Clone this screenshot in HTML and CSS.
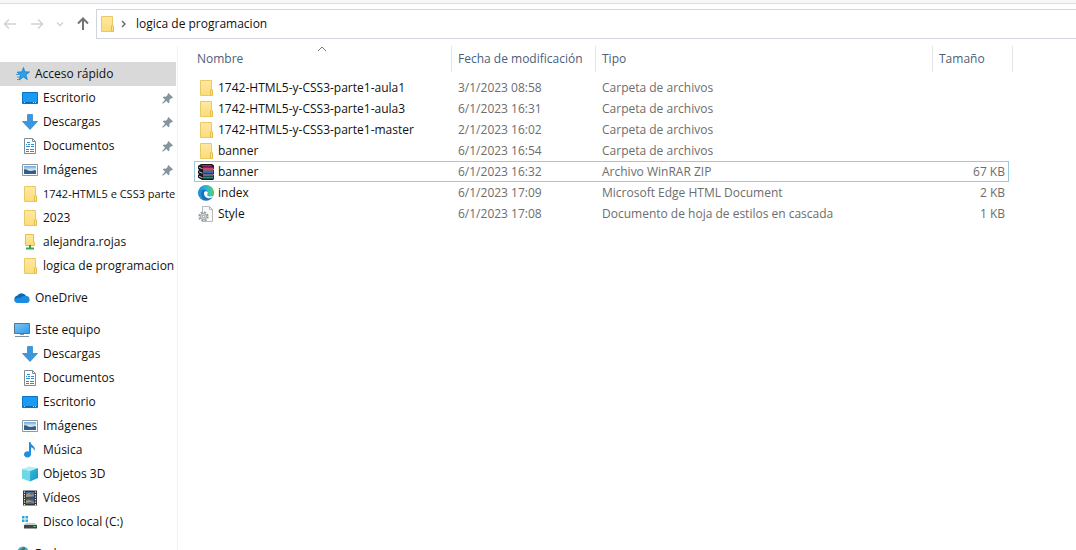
FILE: index.html
```html
<!DOCTYPE html>
<html lang="es">
<head>
<meta charset="utf-8">
<meta name="viewport" content="width=device-width, initial-scale=1">
<title>logica de programacion</title>
<link rel="stylesheet" href="styles.css">
</head>
<body>
<svg class="defs" width="0" height="0" aria-hidden="true">
  <defs>
    <linearGradient id="g-folder" x1="0" y1="0" x2="0" y2="1"><stop offset="0" stop-color="#ffe9a2"/><stop offset="1" stop-color="#fbdb79"/></linearGradient>
    <linearGradient id="g-cube" x1="0" y1="0" x2="1" y2="1"><stop offset="0" stop-color="#3dbfdb"/><stop offset="1" stop-color="#1292c0"/></linearGradient>
    <linearGradient id="g-screen" x1="0" y1="0" x2="1" y2="1"><stop offset="0" stop-color="#7cc6f5"/><stop offset="1" stop-color="#2d9be6"/></linearGradient>
    <linearGradient id="g-edge" x1="0" y1="0" x2="1" y2="0"><stop offset="0" stop-color="#1b8fd8"/><stop offset=".55" stop-color="#2fb9d0"/><stop offset="1" stop-color="#62cf5a"/></linearGradient>
    <linearGradient id="g-photo" x1="0" y1="0" x2="0" y2="1"><stop offset="0" stop-color="#6ba5d8"/><stop offset=".5" stop-color="#dcecf8"/><stop offset="1" stop-color="#2f5f8d"/></linearGradient>
  </defs>
  <symbol id="i-folder" viewBox="0 0 16 16"><path d="M2.500.5h11v11h1v4h-12z" fill="url(#g-folder)" stroke="#ebc962"/><path d="M12.500 15v-5l1-1 1 1v5.500z" fill="#ffe392" stroke="#e5bd4c"/></symbol>
  <symbol id="i-star" viewBox="0 0 16 16"><path d="M9.500 1.500l1.300 4.300 4.700.2-3.600 2.900 1.400 4.600-4-2.500-4 3 1-4.800L3 6.200l5-.4z" fill="#2f9fea" stroke="#1b7fc9" stroke-width=".8"/><path d="M2 8.500h4M3 11h3M3 13.500h2" stroke="#4a9fd8"/></symbol>
  <symbol id="i-desktop" viewBox="0 0 16 16"><path d="M.5 2.500h15v11H.5z" fill="#1b9cf2" stroke="#0b73c4"/><path d="M1 12.500h14" stroke="#086bb8"/><path d="M2 12.500h1M11 12.500h1M13 12.500h1" stroke="#a9dbff"/></symbol>
  <symbol id="i-down" viewBox="0 0 16 16"><path d="M5.500.5h5v7h5L8 15.500.5 7.500h5z" fill="#3a96dd" stroke="#2a7fc4" stroke-width=".7"/></symbol>
  <symbol id="i-doc" viewBox="0 0 16 16"><path d="M2.500.5h8l3 3v12h-11z" fill="#fff" stroke="#7b8a94"/><path d="M10.500.5v3h3" fill="none" stroke="#7b8a94"/><path d="M5 4.500h3M4 6.500h1M6 6.500h2M9 6.500h3M4 8.500h4M9 8.500h3M4 11.500h3M8 11.500h4M4 13.500h3M8 13.500h4" stroke="#2f8bd0"/></symbol>
  <symbol id="i-image" viewBox="0 0 16 16"><path d="M.5 2.500h15v11H.5z" fill="#fff" stroke="#8c979f"/><path d="M2 4h12v8H2z" fill="url(#g-photo)"/><path d="M2 7.500c3-1 4 2 7 1.500s3-1 5-.5V12H2z" fill="#315f8c"/></symbol>
  <symbol id="i-netfolder" viewBox="0 0 16 16"><path d="M3.500.5h8v8h1v3h-9z" fill="url(#g-folder)" stroke="#e5bf52"/><path d="M8 11v3" stroke="#3f9a4c" stroke-width="2"/><path d="M4 14.500h8" stroke="#34a853" stroke-width="2"/></symbol>
  <symbol id="i-cloud" viewBox="0 0 16 16"><path d="M3.500 5.500a5 5 0 0 1 8.600.7L6 12 .5 10a3.700 3.700 0 0 1 3-4.500z" fill="#0d66b7"/><path d="M11.500 6.200a3.400 3.400 0 0 1 1.300 6.800H4C1 13 .3 11 .3 10c2-2.500 4-2.700 5.700-1.700 1.500-1.900 3.600-2.500 5.500-2.100z" fill="#1b8de0"/></symbol>
  <symbol id="i-pc" viewBox="0 0 16 16"><path d="M.5 1.500h15v10H.5z" fill="url(#g-screen)" stroke="#52778f"/><path d="M6 12.500h4M1 14.500h14" stroke="#7e939f"/></symbol>
  <symbol id="i-music" viewBox="0 0 16 16"><path d="M7 0h1.500c.3 3.500 5.500 3.700 4 9-.6-2.200-1.800-3.200-3.500-3.500v7a3.500 3.100 0 1 1-2-2.900z" fill="#1d8fe1"/></symbol>
  <symbol id="i-cube" viewBox="0 0 16 16"><path d="M0 3l7-2.500L16 2l-8 3z" fill="#b5eef5"/><path d="M0 3l8 2v10.500L0 12.500z" fill="#6fd8e6"/><path d="M8 5l8-3v10l-8 3.500z" fill="url(#g-cube)"/></symbol>
  <symbol id="i-video" viewBox="0 0 16 16"><path d="M1 .5h14v15H1z" fill="#303338"/><path d="M4 2h8v5.500H4z" fill="#4a6fb0"/><path d="M4 8.500h8V14H4z" fill="#40619c"/><path d="M4 5l3-2 2 2 3-1v1.500l-4 1-4 .5zM4 11l3-1 5 2v1l-4-1-4 1z" fill="#b69943"/><path d="M2.500 1.500v14M13.500 1.500v14" stroke="#e8ecef" stroke-width="1.200" stroke-dasharray="1.200 1.300"/></symbol>
  <symbol id="i-disk" viewBox="0 0 16 16"><path d="M0 2h2.500v2.500H0zM3.500 2H6v2.500H3.500zM0 5.500h2.500V8H0zM3.500 5.500H6V8H3.500z" fill="#22add6"/><path d="M3.500 9h9l2.500 2H2z" fill="#c6cbce"/><path d="M2 11h13v3.500H2z" fill="#3e4448"/><path d="M11.500 12.500h2" stroke="#58dd6c"/></symbol>
  <symbol id="i-net" viewBox="0 0 16 16"><circle cx="9" cy="6" r="5.500" fill="#55a5c8"/><path d="M5 4c3 0 3-2.500 5-3 2 1 1 3-1 4z" fill="#337e66"/><path d="M1 8h9v6H1z" fill="#2f91d8" stroke="#5d7888"/></symbol>
  <symbol id="i-pin" viewBox="0 0 12 12"><path d="M7 0l5 5-1.200.9-.8-.2-2 2 .2 2.300-1.100 1.100L4.600 8.600 1 11.800l-.8-.8 3.200-3.600L.9 4.900 2 3.800l2.300.2 2-2L6.100 1z" fill="#84959f"/></symbol>
  <symbol id="i-rar" viewBox="0 0 16 16"><path d="M0 2l3-2h11l2 1.500V5l-1 .5 1 1V10l-1 .5 1 1V15l-1 1H4L0 13.500V11l1-1-1-1V7l1-1-1-1.500z" fill="#18141c"/><path d="M2.500 1H13l2 1.500H5z" fill="#c81d62"/><path d="M5 3.500h10.500V5H5z" fill="#dc3c7d"/><path d="M5 7h10.500v2.500H5z" fill="#3d62c4"/><path d="M5 12.500h10.500v2H5z" fill="#199480"/><path d="M1 3.200l3.500 1.600M1 7.700l3.500 1.600M1 12.200l3.500 1.600M5 6h10M5 11h10" stroke="#f4f4f4" stroke-width=".8"/></symbol>
  <symbol id="i-edge" viewBox="0 0 16 16"><circle cx="8" cy="8" r="7.800" fill="#1473c5"/><path d="M.2 8C.5 3 4 .2 8 .2c4.500 0 7.800 3 7.800 6.800 0 2.900-2 4.500-4.500 4.500-1.700 0-2.500-.8-2.300-1.500.2-.5.900-.8.900-1.900C9.900 6 8.300 4.700 6 4.700 3.200 4.700.8 6 .2 8z" fill="url(#g-edge)"/><path d="M6 8.300C6 6.600 7.200 6 8.300 6.200c1.100.2 1.700 1.100 1.600 1.900-.1.900-.9 1.200-.7 1.900.2.900 1.500 1.400 2.800 1.400 1.600 0 2.700-.5 3.500-1.100-.7 1.900-2.200 3-4.200 3C8 13.300 6 11 6 8.300z" fill="#fff"/><path d="M.2 8c.4-1.800 2.400-3 5-3-2.500 1.500-3 5.500.5 10-3-1-5.500-4-5.500-7z" fill="#2292da"/></symbol>
  <symbol id="i-css" viewBox="0 0 16 16"><path d="M4.500.5h7l3 3v12h-10z" fill="#fafafa" stroke="#b4b8ba"/><path d="M11.500.5v3h3" fill="none" stroke="#b4b8ba"/><circle cx="5.500" cy="10.500" r="4.300" fill="none" stroke="#94999c" stroke-width="1.600" stroke-dasharray="2 1.370"/><circle cx="5.500" cy="10.500" r="3.100" fill="#dfe1e2" stroke="#94999c"/><circle cx="5.500" cy="10.500" r="1.200" fill="#fff" stroke="#94999c"/></symbol>
</svg>

<header class="toolbar">
  <div class="history">
    <button class="tool" aria-label="Atrás" disabled><svg width="14" height="12" viewBox="0 0 14 12"><path d="M13 6H1.500M6 1.500L1.500 6 6 10.500"/></svg></button>
    <button class="tool" aria-label="Adelante" disabled><svg width="14" height="12" viewBox="0 0 14 12"><path d="M1 6h11.500M8 1.500L12.500 6 8 10.500"/></svg></button>
    <button class="tool" aria-label="Ubicaciones recientes" disabled><svg width="8" height="6" viewBox="0 0 8 6"><path d="M1 1.500l3 3 3-3"/></svg></button>
    <button class="tool tool-up" aria-label="Subir"><svg width="12" height="14" viewBox="0 0 12 14"><path d="M6 13V2M1 6.500l5-5 5 5"/></svg></button>
  </div>
  <nav class="address" aria-label="Ruta">
    <svg class="icon"><use href="#i-folder"/></svg>
    <svg class="chevron" width="6" height="8" viewBox="0 0 6 8"><path d="M1 1l3 3-3 3"/></svg>
    <a href="#">logica de programacion</a>
  </nav>
</header>

<div class="body">
  <nav class="sidebar" aria-label="Panel de navegación">
    <ul class="group">
      <li><a class="item root current" href="#"><svg class="icon"><use href="#i-star"/></svg><span>Acceso rápido</span></a></li>
      <li><a class="item" href="#"><svg class="icon"><use href="#i-desktop"/></svg><span>Escritorio</span><svg class="pin"><use href="#i-pin"/></svg></a></li>
      <li><a class="item" href="#"><svg class="icon"><use href="#i-down"/></svg><span>Descargas</span><svg class="pin"><use href="#i-pin"/></svg></a></li>
      <li><a class="item" href="#"><svg class="icon"><use href="#i-doc"/></svg><span>Documentos</span><svg class="pin"><use href="#i-pin"/></svg></a></li>
      <li><a class="item" href="#"><svg class="icon"><use href="#i-image"/></svg><span>Imágenes</span><svg class="pin"><use href="#i-pin"/></svg></a></li>
      <li><a class="item long" href="#"><svg class="icon"><use href="#i-folder"/></svg><span>1742-HTML5 e CSS3 parte</span></a></li>
      <li><a class="item" href="#"><svg class="icon"><use href="#i-folder"/></svg><span>2023</span></a></li>
      <li><a class="item" href="#"><svg class="icon"><use href="#i-netfolder"/></svg><span>alejandra.rojas</span></a></li>
      <li><a class="item" href="#"><svg class="icon"><use href="#i-folder"/></svg><span>logica de programacion</span></a></li>
    </ul>
    <ul class="group">
      <li><a class="item root" href="#"><svg class="icon"><use href="#i-cloud"/></svg><span>OneDrive</span></a></li>
    </ul>
    <ul class="group">
      <li><a class="item root" href="#"><svg class="icon"><use href="#i-pc"/></svg><span>Este equipo</span></a></li>
      <li><a class="item" href="#"><svg class="icon"><use href="#i-down"/></svg><span>Descargas</span></a></li>
      <li><a class="item" href="#"><svg class="icon"><use href="#i-doc"/></svg><span>Documentos</span></a></li>
      <li><a class="item" href="#"><svg class="icon"><use href="#i-desktop"/></svg><span>Escritorio</span></a></li>
      <li><a class="item" href="#"><svg class="icon"><use href="#i-image"/></svg><span>Imágenes</span></a></li>
      <li><a class="item" href="#"><svg class="icon"><use href="#i-music"/></svg><span>Música</span></a></li>
      <li><a class="item" href="#"><svg class="icon"><use href="#i-cube"/></svg><span>Objetos 3D</span></a></li>
      <li><a class="item" href="#"><svg class="icon"><use href="#i-video"/></svg><span>Vídeos</span></a></li>
      <li><a class="item" href="#"><svg class="icon"><use href="#i-disk"/></svg><span>Disco local (C:)</span></a></li>
    </ul>
    <ul class="group">
      <li><a class="item root" href="#"><svg class="icon"><use href="#i-net"/></svg><span>Red</span></a></li>
    </ul>
  </nav>

  <main class="files">
    <table>
      <colgroup><col class="c-name"><col class="c-date"><col class="c-type"><col class="c-size"><col class="c-edge"></colgroup>
      <thead>
        <tr>
          <th scope="col" aria-sort="ascending">Nombre<svg class="sort" width="10" height="6" viewBox="0 0 10 6"><path d="M1 5l4-4 4 4"/></svg></th>
          <th scope="col">Fecha de modificación</th>
          <th scope="col">Tipo</th>
          <th scope="col" colspan="2">Tamaño</th>
        </tr>
      </thead>
      <tbody>
        <tr><td><a class="file" href="#"><svg class="icon"><use href="#i-folder"/></svg>1742-HTML5-y-CSS3-parte1-aula1</a></td><td>3/1/2023 08:58</td><td>Carpeta de archivos</td><td></td></tr>
        <tr><td><a class="file" href="#"><svg class="icon"><use href="#i-folder"/></svg>1742-HTML5-y-CSS3-parte1-aula3</a></td><td>6/1/2023 16:31</td><td>Carpeta de archivos</td><td></td></tr>
        <tr><td><a class="file" href="#"><svg class="icon"><use href="#i-folder"/></svg>1742-HTML5-y-CSS3-parte1-master</a></td><td>2/1/2023 16:02</td><td>Carpeta de archivos</td><td></td></tr>
        <tr><td><a class="file" href="#"><svg class="icon"><use href="#i-folder"/></svg>banner</a></td><td>6/1/2023 16:54</td><td>Carpeta de archivos</td><td></td></tr>
        <tr class="focused"><td><a class="file" href="#"><svg class="icon"><use href="#i-rar"/></svg>banner</a></td><td>6/1/2023 16:32</td><td>Archivo WinRAR ZIP</td><td>67 KB</td></tr>
        <tr><td><a class="file" href="#"><svg class="icon"><use href="#i-edge"/></svg>index</a></td><td>6/1/2023 17:09</td><td>Microsoft Edge HTML Document</td><td>2 KB</td></tr>
        <tr><td><a class="file" href="#"><svg class="icon"><use href="#i-css"/></svg>Style</a></td><td>6/1/2023 17:08</td><td>Documento de hoja de estilos en cascada</td><td>1 KB</td></tr>
      </tbody>
    </table>
  </main>
</div>
</body>
</html>
```
FILE: styles.css
```css
* {
  box-sizing: border-box;
}

body {
  margin: 0;
  height: 100vh;
  display: flex;
  flex-direction: column;
  overflow: hidden;
  background: #fff;
  color: #111;
  font-family: "Open Sans", "Noto Sans", sans-serif;
  font-size: 12px;
  line-height: 16px;
}

a {
  color: inherit;
  text-decoration: none;
}

.defs {
  position: absolute;
}

.icon {
  width: 16px;
  height: 16px;
  flex: none;
}

.toolbar {
  display: flex;
  align-items: center;
  flex: none;
  padding-top: 5px;
  border-top: 1px solid #dcdddf;
  box-shadow: 0 -3px #f6f7f8;
  margin-top: 3px;
}

.history {
  display: flex;
  align-items: center;
  justify-content: space-between;
  flex: none;
  width: 96px;
  padding: 0 7px 0 3px;
}

.tool {
  display: flex;
  padding: 0;
  border: 0;
  background: none;
}

.tool path,
.chevron path,
.sort path {
  fill: none;
  stroke: #d2d2d2;
  stroke-width: 1.4;
}

.tool-up path {
  stroke: #737373;
  stroke-width: 2;
}

.address {
  display: flex;
  align-items: center;
  flex: 1;
  height: 30px;
  padding-left: 2px;
  border: 1px solid #d0d4de;
  border-right: 0;
}

.chevron {
  margin: 0 9px 0 6px;
}

.chevron path {
  stroke: #666;
}

.body {
  display: flex;
  flex: 1;
  min-height: 0;
  padding-top: 7px;
}

.sidebar {
  width: 178px;
  flex: none;
  padding: 16px 1px 0 0;
  border-right: 1px solid #f3f3f3;
  overflow: hidden;
}

.group {
  margin: 0 0 8px;
  padding: 0;
  list-style: none;
}

.item {
  display: flex;
  align-items: center;
  gap: 5px;
  height: 24px;
  padding-left: 22px;
  white-space: nowrap;
}

.item span {
  flex: 1;
  min-width: 0;
}

.root {
  padding-left: 14px;
}

.current {
  background: #d9d9d9;
}

.long {
  font-size: 11px;
}

.pin {
  width: 11px;
  height: 11px;
  margin-right: 3px;
  flex: none;
}

.files {
  flex: 1;
  min-width: 0;
  padding-left: 16px;
}

table {
  table-layout: fixed;
  width: 819px;
  border-collapse: separate;
  border-spacing: 0;
}

.c-name {
  width: 258px;
}

.c-date {
  width: 144px;
}

.c-type {
  width: 337px;
}

.c-edge {
  width: 4px;
}

th {
  position: relative;
  height: 26px;
  padding: 0 6px;
  border-right: 1px solid #e5e5e5;
  color: #4c607a;
  font-weight: 400;
  text-align: left;
}

th:first-child {
  padding-left: 3px;
}

.sort {
  position: absolute;
  top: 0;
  left: 50%;
  margin-left: -6px;
}

.sort path {
  stroke: #777;
  stroke-width: 1;
}

thead::after {
  content: "";
  display: block;
  height: 5px;
}

td {
  height: 21px;
  padding: 0 6px;
  border: 0 solid #99c9dd;
  color: #6d6d6d;
  white-space: nowrap;
}

td:first-child {
  padding-left: 4px;
}

td:nth-child(4) {
  padding-right: 4px;
  text-align: right;
}

.file {
  display: flex;
  align-items: center;
  gap: 4px;
  color: #111;
}

.focused td {
  border-width: 1px 0;
}

.focused td:first-child {
  border-left-width: 1px;
  padding-left: 3px;
}

.focused td:nth-child(4) {
  border-right-width: 1px;
  padding-right: 3px;
}
```
